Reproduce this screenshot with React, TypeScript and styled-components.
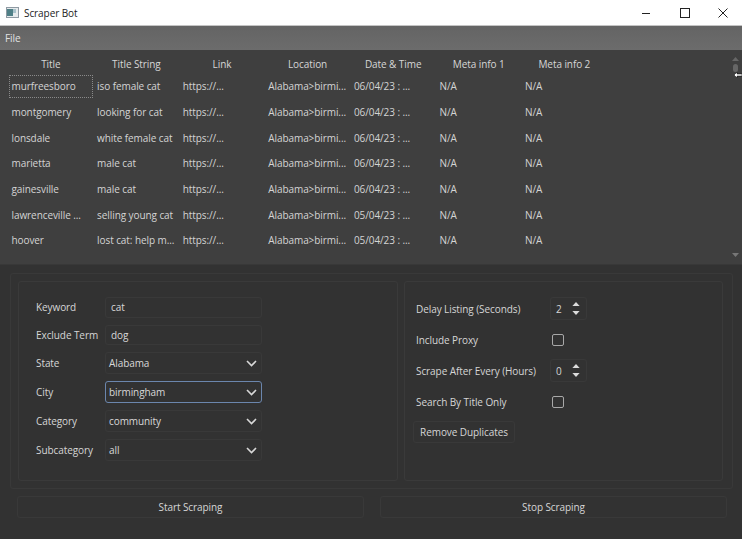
import styled, { createGlobalStyle } from 'styled-components'

const GlobalStyle = createGlobalStyle`
  html, body {
    margin: 0;
    padding: 0;
    background: #323232;
  }
  * {
    box-sizing: border-box;
  }
`

const Window = styled.div`
  width: 742px;
  height: 539px;
  overflow: hidden;
  display: flex;
  flex-direction: column;
  background: #323232;
  color: #d6d6d6;
  font-family: 'Open Sans', 'Noto Sans', sans-serif;
  font-size: 10px;
  letter-spacing: -0.08px;
`

const TitleBar = styled.div`
  height: 26px;
  flex: none;
  display: flex;
  align-items: center;
  padding-left: 6px;
  background: #fff;
  border-bottom: 1px solid #c4c4c4;
  color: #222;
`

const TitleText = styled.span`
  margin-left: 5px;
  flex: 1;
`

const WinButton = styled.div`
  width: 38.5px;
  height: 25px;
  padding-left: 1px;
  display: flex;
  align-items: center;
  justify-content: center;
`

const MenuBar = styled.div`
  height: 24px;
  flex: none;
  display: flex;
  align-items: center;
  padding-left: 5px;
  background: linear-gradient(#646464, #6c6c6c);
  color: #e2e2e2;
`

const TablePanel = styled.div`
  position: relative;
  height: 215px;
  flex: none;
  display: flex;
  justify-content: space-between;
  padding-left: 8px;
  background: #3f3f3f;
  border-bottom: 1px solid #383838;
`

const Table = styled.div`
  display: grid;
  grid-template-columns: repeat(7, 85.6px);
  grid-template-rows: 23.5px;
  grid-auto-rows: 25.67px;
  align-content: start;
`

const HeaderCell = styled.div`
  display: flex;
  align-items: flex-end;
  justify-content: center;
  padding-bottom: 2.5px;
  color: #d6d6d6;
`

const Cell = styled.div<{ $focused?: boolean }>`
  display: flex;
  align-items: center;
  padding-left: 3.5px;
  white-space: nowrap;
  overflow: hidden;
  color: #d4d4d4;
  ${p => p.$focused && 'outline: 1px dotted #8a8a8a; outline-offset: -2px;'}
`

const ScrollTrack = styled.div`
  width: 14px;
  padding: 7px 0 7px;
  display: flex;
  flex-direction: column;
  align-items: center;
`

const ScrollThumb = styled.div`
  width: 5px;
  height: 8px;
  margin-top: 3px;
  border-radius: 3px;
  background: #666;
  flex: none;
`

const ScrollSpacer = styled.div`
  flex: 1;
`

const Cursor = styled.svg`
  position: absolute;
  right: 0;
  top: 21px;
`

const GroupBox = styled.div`
  margin: 8px 9px 0 10px;
  height: 216px;
  padding: 7px 9px 7px 7px;
  display: flex;
  gap: 6px;
  border: 1px solid #393939;
  border-radius: 3px;
`

const Panel = styled.div<{ $wide?: boolean }>`
  width: ${p => (p.$wide ? '380px' : '319px')};
  height: 200px;
  flex: none;
  border: 1px solid #3a3a3a;
  border-radius: 3px;
`

const FormPanel = styled(Panel)`
  padding: 15px 0 0 17px;
  display: grid;
  grid-template-columns: 69px 157px;
  grid-auto-rows: min-content;
  row-gap: 7px;
  align-items: center;
`

const OptionsPanel = styled(Panel)`
  padding: 15px 0 0 8px;
  display: flex;
  flex-direction: column;
  gap: 8px;
`

const TextField = styled.div`
  height: 20.5px;
  display: flex;
  align-items: center;
  padding-left: 5px;
  border: 1px solid #393939;
  border-radius: 3px;
  color: #d8d8d8;
`

const Select = styled.div<{ $focused?: boolean }>`
  height: 22px;
  display: flex;
  align-items: center;
  justify-content: space-between;
  padding: 0 4px 0 3px;
  border: 1px solid ${p => (p.$focused ? '#6b86ad' : '#393939')};
  border-radius: 3px;
  color: #d8d8d8;
`

const OptionRow = styled.div`
  height: 23px;
  padding-left: 3px;
  display: grid;
  grid-template-columns: 134px auto;
  justify-content: start;
  align-items: center;
`

const Spinner = styled.div`
  width: 37px;
  height: 23px;
  display: flex;
  align-items: center;
  justify-content: space-between;
  padding: 0 6px 0 5px;
  border: 1px solid #393939;
  border-radius: 3px;
`

const SpinArrows = styled.svg`
  flex: none;
`

const Checkbox = styled.div`
  width: 12px;
  height: 12px;
  margin-left: 2px;
  border: 1.5px solid #a8a8a8;
  border-radius: 2px;
`

const SmallButton = styled.div`
  width: 102px;
  height: 22px;
  display: flex;
  align-items: center;
  justify-content: center;
  border: 1px solid #393939;
  border-radius: 3px;
`

const ActionRow = styled.div`
  margin-top: 7px;
  padding: 0 15px 0 17px;
  display: flex;
  gap: 16px;
`

const ActionButton = styled.div`
  flex: 1;
  height: 22px;
  display: flex;
  align-items: center;
  justify-content: center;
  border: 1px solid #393939;
  border-radius: 3px;
`

const columns = ['Title', 'Title String', 'Link', 'Location', 'Date & Time', 'Meta info 1', 'Meta info 2']

const rows = [
  ['murfreesboro', 'iso female cat', '06/04/23 : ...'],
  ['montgomery', 'looking for cat', '06/04/23 : ...'],
  ['lonsdale', 'white female cat', '06/04/23 : ...'],
  ['marietta', 'male cat', '06/04/23 : ...'],
  ['gainesville', 'male cat', '06/04/23 : ...'],
  ['lawrenceville ...', 'selling young cat', '05/04/23 : ...'],
  ['hoover', 'lost cat: help m...', '05/04/23 : ...'],
]

const Chevron = () => (
  <svg width="11" height="7" viewBox="0 0 11 7" fill="none">
    <path d="M1 1l4.5 4.5L10 1" stroke="#d8d8d8" strokeWidth="1.6" />
  </svg>
)

const Arrows = () => (
  <SpinArrows width="8" height="15" viewBox="0 0 8 15" fill="#dcdcdc">
    <path d="M4 1l3.6 4H.4z" />
    <path d="M4 14l3.6-4H.4z" />
  </SpinArrows>
)

export default function App() {
  return (
    <Window>
      <GlobalStyle />
      <TitleBar>
        <svg width="13" height="11" viewBox="0 0 13 11">
          <rect x="0" y="0" width="13" height="11" fill="#8f9aa3" />
          <rect x="1" y="1" width="11" height="9" fill="#e6eaec" />
          <rect x="1" y="2" width="6" height="7" fill="#4f7f86" />
          <rect x="7" y="2" width="3" height="4" fill="#a9c2ca" />
        </svg>
        <TitleText>Scraper Bot</TitleText>
        <WinButton>
          <svg width="10" height="10" viewBox="0 0 10 10">
            <path d="M1 5.5h8" stroke="#222" strokeWidth="1" />
          </svg>
        </WinButton>
        <WinButton>
          <svg width="10" height="10" viewBox="0 0 10 10" fill="none">
            <rect x="0.5" y="0.5" width="9" height="9" stroke="#222" strokeWidth="1" />
          </svg>
        </WinButton>
        <WinButton>
          <svg width="10" height="10" viewBox="0 0 10 10">
            <path d="M.5.5l9 9M9.5.5l-9 9" stroke="#222" strokeWidth="1" />
          </svg>
        </WinButton>
      </TitleBar>
      <MenuBar>File</MenuBar>
      <TablePanel>
        <Table>
          {columns.map(c => (
            <HeaderCell key={c}>{c}</HeaderCell>
          ))}
          {rows.map((r, i) => [
            <Cell key={`${i}-0`} $focused={i === 0}>{r[0]}</Cell>,
            <Cell key={`${i}-1`}>{r[1]}</Cell>,
            <Cell key={`${i}-2`}>https://...</Cell>,
            <Cell key={`${i}-3`}>Alabama&gt;birmi...</Cell>,
            <Cell key={`${i}-4`}>{r[2]}</Cell>,
            <Cell key={`${i}-5`}>N/A</Cell>,
            <Cell key={`${i}-6`}>N/A</Cell>,
          ])}
        </Table>
        <ScrollTrack>
          <svg width="7" height="4" viewBox="0 0 7 4" fill="#666">
            <path d="M3.5 0L7 4H0z" />
          </svg>
          <ScrollThumb />
          <ScrollSpacer />
          <svg width="7" height="4" viewBox="0 0 7 4" fill="#777">
            <path d="M3.5 4L7 0H0z" />
          </svg>
        </ScrollTrack>
        <Cursor width="8" height="8" viewBox="0 0 8 8">
          <path d="M0 4l3-3v2h5v2H3v2z" fill="#fff" stroke="#000" strokeWidth="0.5" />
        </Cursor>
      </TablePanel>
      <GroupBox>
        <FormPanel $wide>
          <span>Keyword</span>
          <TextField>cat</TextField>
          <span>Exclude Term</span>
          <TextField>dog</TextField>
          <span>State</span>
          <Select>Alabama<Chevron /></Select>
          <span>City</span>
          <Select $focused>birmingham<Chevron /></Select>
          <span>Category</span>
          <Select>community<Chevron /></Select>
          <span>Subcategory</span>
          <Select>all<Chevron /></Select>
        </FormPanel>
        <OptionsPanel>
          <OptionRow>
            <span>Delay Listing (Seconds)</span>
            <Spinner>2<Arrows /></Spinner>
          </OptionRow>
          <OptionRow>
            <span>Include Proxy</span>
            <Checkbox />
          </OptionRow>
          <OptionRow>
            <span>Scrape After Every (Hours)</span>
            <Spinner>0<Arrows /></Spinner>
          </OptionRow>
          <OptionRow>
            <span>Search By Title Only</span>
            <Checkbox />
          </OptionRow>
          <SmallButton>Remove Duplicates</SmallButton>
        </OptionsPanel>
      </GroupBox>
      <ActionRow>
        <ActionButton>Start Scraping</ActionButton>
        <ActionButton>Stop Scraping</ActionButton>
      </ActionRow>
    </Window>
  )
}
